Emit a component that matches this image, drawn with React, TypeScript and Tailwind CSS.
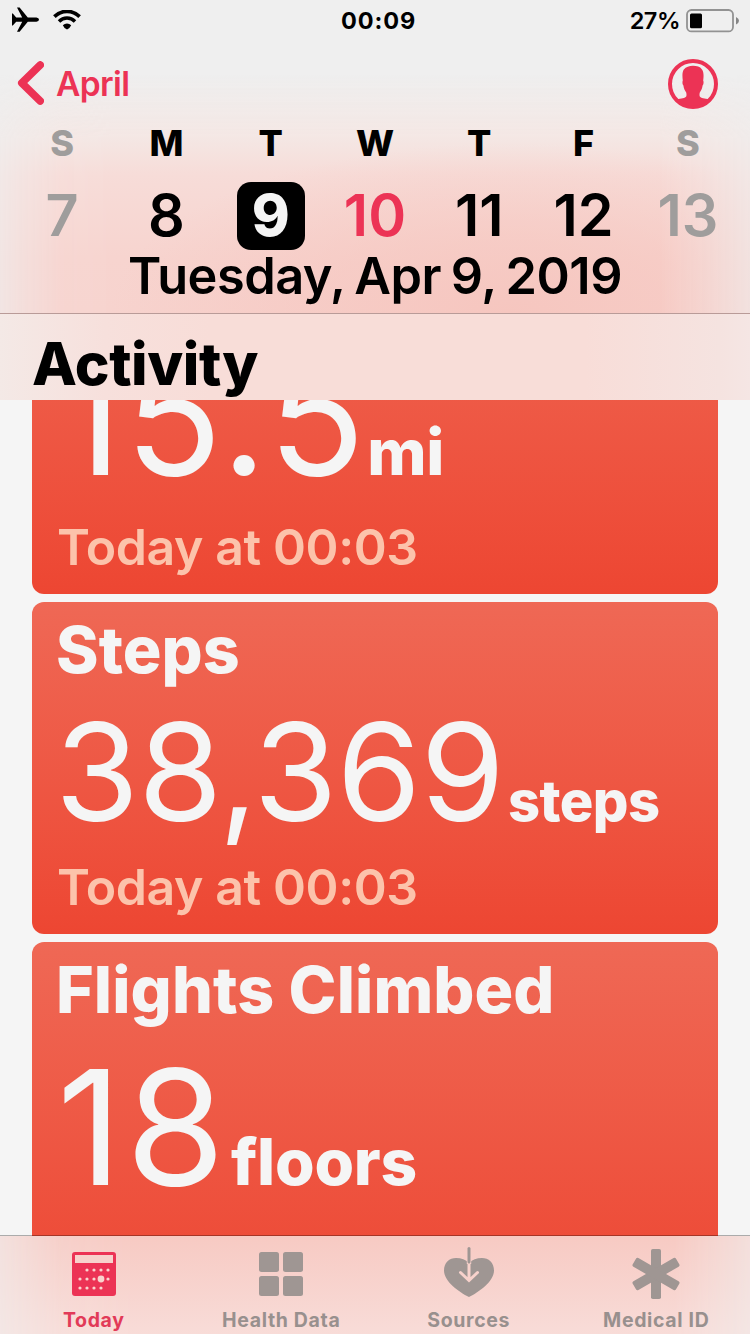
import type { ReactNode } from "react";

const days = [
  { letter: "S", num: "7", kind: "weekend" },
  { letter: "M", num: "8", kind: "normal" },
  { letter: "T", num: "9", kind: "selected" },
  { letter: "W", num: "10", kind: "today" },
  { letter: "T", num: "11", kind: "normal" },
  { letter: "F", num: "12", kind: "normal" },
  { letter: "S", num: "13", kind: "weekend" },
];

const dayColor: Record<string, string> = {
  weekend: "text-[#9f9d9c] font-semibold",
  normal: "text-black font-semibold",
  selected: "bg-black text-[#f5f5f5] font-extrabold",
  today: "text-[#ec3355] font-semibold",
};

function StatusBar() {
  return (
    <div className="relative flex h-[41px] items-center justify-between pr-[11px] pl-3">
      <div className="flex items-center gap-[14px]">
        <svg width="27" height="26" viewBox="0 0 27 26" className="-mt-[2px]">
          <path
            d="M0 6.600H0.800L4.200 10.400H10.200L5 0.600H7.600L15.800 10.400H24.400Q27 10.600 27 12.600T24.400 14.800H15.800L7.600 24.800H5L10.200 14.800H4.200L0.800 18.400H0Z"
            fill="#000"
          />
        </svg>
        <svg width="28" height="20" viewBox="0 0 28 20" className="-mt-[2px]">
          <path d="M1.400 6.600A17.800 17.800 0 0 1 26.600 6.600" fill="none" stroke="#000" strokeWidth="3.700" />
          <path d="M6 11.400A11.400 11.400 0 0 1 22 11.400" fill="none" stroke="#000" strokeWidth="3.500" />
          <path d="M9.800 15.200A6 6 0 0 1 18.200 15.200Q16.800 18.400 14 19.600Q11.200 18.400 9.800 15.200Z" fill="#000" />
        </svg>
      </div>
      <div className="absolute inset-0 flex items-center justify-center pt-px pl-[7px] text-[23.5px] font-bold tracking-[0.9px]">
        00:09
      </div>
      <div className="flex items-center gap-[6px]">
        <span className="pt-px text-[23.5px] font-semibold tracking-[-0.5px]">27%</span>
        <svg width="53" height="24" viewBox="0 0 53 24">
          <rect x="1" y="1" width="46" height="21.400" rx="4.500" fill="none" stroke="#929292" strokeWidth="1.800" />
          <rect x="4" y="4.400" width="12" height="14.800" rx="1.500" fill="#000" />
          <path d="M50 8Q53 9.500 53 11.800T50 15.600Z" fill="#858585" />
        </svg>
      </div>
    </div>
  );
}

function Header() {
  return (
    <header className="relative isolate h-[314px] shrink-0 border-b border-[#b99b98] bg-[#efefef]">
      <div className="absolute inset-0 -z-10 bg-[radial-gradient(400px_170px_at_68%_100%,#f6c6bf,rgba(246,198,191,0.55)_50%,transparent),linear-gradient(to_bottom,transparent_24%,#f4e7e4_44%,#f7dcd8_56%,#f7d4cf_82%,#f7d3ce_100%)] [mask-image:linear-gradient(to_right,rgba(0,0,0,0.35),rgba(0,0,0,0.6)_3%,rgba(0,0,0,0.92)_8%,#000_15%,#000_88%,rgba(0,0,0,0.75)_94%,rgba(0,0,0,0.4))]" />
      <StatusBar />
      <div className="flex h-[86px] items-center justify-between pr-8 pl-[17px]">
        <div className="flex items-center gap-[13px]">
          <svg width="27" height="46" viewBox="0 0 27 46">
            <path d="M23.200 4L4.800 22L23.200 40" fill="none" stroke="#ec3355" strokeWidth="7.600" strokeLinecap="round" strokeLinejoin="round" />
          </svg>
          <span className="-ml-px pt-[2px] text-[33.5px] font-semibold tracking-[-0.6px] text-[#ec3355]">April</span>
        </div>
        <svg width="50" height="50" viewBox="0 0 50 50">
          <circle cx="25" cy="25" r="23" fill="none" stroke="#ec3355" strokeWidth="4" />
          <path
            d="M9 40.500C13 39.600 17.400 39.400 18.200 37.600C18.700 36.400 18.500 34.600 18.200 33.400C16.600 31.200 15.800 29 15.400 26.400C14.200 25.600 14.300 22.500 14.800 21.600C14.200 16.800 14.200 12.800 15.800 10.400C18 8 21.200 6.800 25 6.800S32 7.600 34 10.400C35.800 12.800 35.800 16.800 35.200 21.600C35.700 22.500 35.800 25.600 34.600 26.400C34.200 29 33.400 31.200 31.800 33.400C31.500 34.600 31.300 36.400 31.800 37.600C32.600 39.400 37 39.600 41 40.500A23 23 0 0 1 9 40.500Z"
            fill="#ec3355"
          />
        </svg>
      </div>
      <div className="grid grid-cols-7 px-[10px]">
        {days.map((d, i) => (
          <div key={i} className="flex flex-col items-center gap-[22px]">
            <span
              className={
                d.kind === "weekend"
                  ? "flex h-[33px] items-center pb-[2px] text-[36px] font-extrabold text-[#9f9d9c]"
                  : "flex h-[33px] items-center pb-[2px] text-[36px] font-extrabold text-black"
              }
            >
              {d.letter}
            </span>
            <span className={`flex h-[68px] w-[68px] items-center justify-center rounded-[14px] text-[57.5px] ${dayColor[d.kind]}`}>
              {d.num}
            </span>
          </div>
        ))}
      </div>
      <div className="flex h-[52px] items-center justify-center pt-px text-[50.5px] font-semibold tracking-[-0.5px] [word-spacing:-2.5px]">
        Tuesday, Apr 9, 2019
      </div>
    </header>
  );
}

function Card({ title, children, time, tall }: { title: string; children: ReactNode; time: string; tall?: boolean }) {
  return (
    <section
      className={`flex shrink-0 flex-col rounded-[12px] bg-linear-to-b from-[#ef6855] to-[#ed4632] px-[25px] text-[#f5f5f5] ${
        tall ? "h-[362px]" : "h-[332px]"
      }`}
    >
      <h2 className="-ml-px flex h-24 shrink-0 items-center pt-px text-[64.5px] font-extrabold tracking-[0.1px]">{title}</h2>
      <div className="flex h-0 grow items-baseline pt-[2px]">{children}</div>
      <p className="flex h-[95px] shrink-0 items-center text-[50px] font-semibold tracking-[-0.4px] text-[#fcc3ab]">{time}</p>
    </section>
  );
}

const tabs = [
  {
    label: "Today",
    active: true,
    icon: (
      <svg width="52" height="52" viewBox="0 0 52 52">
        <rect x="4" y="4" width="44" height="44" rx="3" fill="#ec3355" />
        <rect x="7" y="7" width="38" height="8" fill="#f7d2cc" />
        <g fill="#f9d3ce">
          {[19, 26, 33, 40].map((x) => (
            <circle key={x} cx={x} cy="22" r="1.600" />
          ))}
          {[12, 19, 26, 40].map((x) => (
            <circle key={x} cx={x} cy="31" r="1.600" />
          ))}
          {[12, 19, 26, 33].map((x) => (
            <circle key={x} cx={x} cy="40" r="1.600" />
          ))}
          <circle cx="33" cy="31" r="3.400" />
        </g>
      </svg>
    ),
  },
  {
    label: "Health Data",
    active: false,
    icon: (
      <svg width="52" height="52" viewBox="0 0 52 52" fill="#9f9693">
        <rect x="4" y="4" width="20" height="20" rx="2.500" />
        <rect x="28" y="4" width="20" height="20" rx="2.500" />
        <rect x="4" y="28" width="20" height="20" rx="2.500" />
        <rect x="28" y="28" width="20" height="20" rx="2.500" />
      </svg>
    ),
  },
  {
    label: "Sources",
    active: false,
    icon: (
      <svg width="52" height="52" viewBox="0 0 52 52" className="overflow-visible">
        <path
          d="M26 49C16 44 1 33.500 1 22.500C1 14.500 6.500 10 13 10C18.500 10 22.500 11.500 26 15C29.500 11.500 33.500 10 39 10C45.500 10 51 14.500 51 22.500C51 33.500 36 44 26 49Z"
          fill="#9f9693"
        />
        <path d="M26 15V32M17.500 24.500L26 32.500L34.500 24.500" fill="none" stroke="#f8d2cc" strokeWidth="3" strokeLinecap="round" />
        <path d="M23.800 9H28.200V16H23.800Z" fill="#f8d0ca" />
        <path d="M26 0.500V14" stroke="#9f9693" strokeWidth="3" strokeLinecap="round" />
      </svg>
    ),
  },
  {
    label: "Medical ID",
    active: false,
    icon: (
      <svg width="52" height="52" viewBox="0 0 52 52" fill="#9f9693">
        <rect x="21" y="1" width="10" height="50" rx="1.800" />
        <rect x="21" y="1" width="10" height="50" rx="1.800" transform="rotate(60 26 26)" />
        <rect x="21" y="1" width="10" height="50" rx="1.800" transform="rotate(-60 26 26)" />
      </svg>
    ),
  },
];

function TabBar() {
  return (
    <nav className="relative isolate grid h-[98px] shrink-0 grid-cols-4 bg-[#f1edec]">
      <div className="absolute inset-0 -z-10 bg-[linear-gradient(to_bottom,#f7cac3,#f8dcd8)] [mask-image:linear-gradient(to_right,rgba(0,0,0,0.35),rgba(0,0,0,0.85)_8%,#000_18%,#000_90%,rgba(0,0,0,0.4))]" />
      <div className="absolute inset-x-0 -top-px h-px bg-black/30" />
      {tabs.map((t) => (
        <div key={t.label} className="flex flex-col items-center pt-3">
          {t.icon}
          <span
            className={
              t.active
                ? "mt-[10px] text-[19.5px] leading-[20px] font-bold tracking-[0.65px] text-[#e23a58]"
                : "mt-[10px] text-[19.5px] leading-[20px] font-bold tracking-[0.65px] text-[#98908e]"
            }
          >
            {t.label}
          </span>
        </div>
      ))}
    </nav>
  );
}

export default function App() {
  return (
    <div className="flex h-[1334px] w-[750px] flex-col overflow-hidden bg-[#f5f5f5] font-['Inter','Liberation_Sans',sans-serif] leading-none whitespace-nowrap text-black">
      <Header />
      <div className="h-[86px] shrink-0 bg-[linear-gradient(to_right,#f4e9e6,#f7e0dc_14%,#f8ddd8_28%,#f8ddd8_78%,#f5e3e0_96%,#f5e6e4)] px-8 pt-[14px]">
        <h1 className="flex h-[72px] items-center text-[58.5px] font-extrabold tracking-[-0.4px]">Activity</h1>
      </div>
      <main className="flex min-h-0 grow flex-col overflow-hidden px-8">
        <div className="-mt-[168px] flex flex-col gap-2">
          <Card title="Walking + Running" time="Today at 00:03" tall>
            <span className="text-[160px] leading-[174px] font-normal tracking-[3px]">15.5</span>
            <span className="-ml-px text-[64px] font-extrabold tracking-[-0.3px]">mi</span>
          </Card>
          <Card title="Steps" time="Today at 00:03">
            <span className="-ml-[2px] text-[136px] leading-[144px] font-normal tracking-[-0.7px]">38,369</span>
            <span className="ml-[4px] text-[56px] font-extrabold tracking-[-0.6px]">steps</span>
          </Card>
          <Card title="Flights Climbed" time="Today at 00:03" tall>
            <span className="text-[160px] leading-[174px] font-normal tracking-[4px]">18</span>
            <span className="ml-[2px] text-[64px] font-extrabold tracking-[-0.2px]">floors</span>
          </Card>
        </div>
      </main>
      <TabBar />
    </div>
  );
}
